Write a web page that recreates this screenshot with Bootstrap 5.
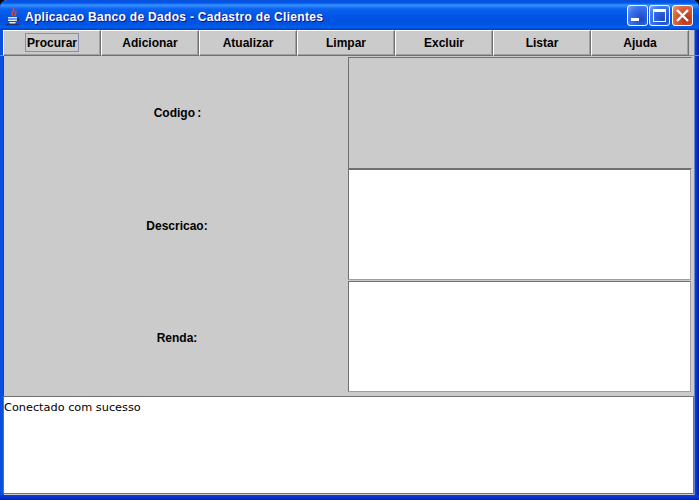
<!DOCTYPE html>
<html lang="pt">
<head>
<meta charset="utf-8">
<title>Aplicacao Banco de Dados</title>
<link rel="stylesheet" href="https://cdn.jsdelivr.net/npm/bootstrap@5.3.0/dist/css/bootstrap.min.css">
<style>
html,body{margin:0;height:500px;overflow:hidden;background:#000}
.xp-window{width:699px;height:500px;background:linear-gradient(90deg,#0a4be0 0,#0855dd 2px,#0a3cd8 4px,#cbcbcb 4px,#cbcbcb 694px,#0a3cd8 695px,#0831c8 697px,#001ea0 699px);border-radius:7px 7px 0 0;overflow:hidden}
.xp-title{height:30px;background:linear-gradient(180deg,#0a4fd8 0,#0058ee 3px,#3a93ff 5px,#0a62f0 9px,#0055e5 16px,#0053e0 24px,#0061f0 27px,#003cc0 30px);padding-left:5px;color:#fff;font:bold 12px/14px "Liberation Sans",sans-serif;letter-spacing:.3px;text-shadow:1px 1px 0 #0f1089}
.xp-title span{white-space:nowrap;margin-left:4px;margin-top:10px}
.xp-ctl{width:21px;height:21px;border:1px solid #fff;border-radius:3px;background:radial-gradient(circle at 70% 70%,#1a46c8,#3b74ee 65%,#7da6f5);margin-left:1px;margin-top:1px}
.xp-close{background:radial-gradient(circle at 70% 70%,#b83010,#e0643c 65%,#eb9a80);margin-left:2px}
.xp-controls{margin-right:6px}
.xp-tools{height:26px;padding-left:3px;border-bottom:1px solid #8a8a8a}
.xp-btn{width:98px;height:26px;background:#cbcbcb;border:1px solid;border-color:#fff #707070 #707070 #fff;box-shadow:inset -1px -1px 0 #a0a0a0;padding:1px 0 0;color:#000;font:bold 12px "Liberation Sans",sans-serif;border-radius:0}
.xp-btn span{padding:1px 0}
.xp-focus span{outline:1px solid #8d8dae;padding:2px 1px 1px}
.xp-form{height:339px;padding:0 3px 0 4px}
.xp-row{height:112px}
.xp-row:first-child{height:113px}
.xp-label{width:344px;padding:2px 0 0 2px;font:bold 12px "Liberation Sans",sans-serif;color:#000}
.xp-tight{word-spacing:-1px;padding-left:3px}
.xp-field{width:344px;padding:0 1px 1px 0}
.xp-row:first-child .xp-field{padding:0}
.xp-input{height:111px;border:1px solid;border-color:#707070 #a0a0a0 #a0a0a0 #707070;background:#fff}
.xp-empty{height:112px;background:#cbcbcb;border-color:#707070 transparent #707070 #707070}
.xp-status{width:691px;height:98px;margin-left:3px;margin-top:2px;background:#fff;border:1px solid #707070;padding:4px 0 0;font:11.3px/14px "DejaVu Sans",sans-serif;color:#000}
.xp-base{height:5px;margin-top:1px;background:linear-gradient(180deg,#0a3cd8,#0831c8 60%,#001ea0)}
</style>
</head>
<body>
<div class="xp-window d-flex flex-column">
  <div class="xp-title d-flex align-items-start">
    <svg width="16" height="20" viewBox="0 0 16 20" class="mt-2" aria-hidden="true">
      <path d="M8 0c3 3-3 4 0 8M10.500 3c1.500 2-1.500 3 0 5" fill="none" stroke="#e8421c" stroke-width="1.700"/>
      <path d="M3 9h9v1.500H3zM3 11.500h9V13H3zM4 14h7l-1 1.500H5z" fill="#dfe6f5"/>
      <path d="M12 10h2v3h-2zM1 16h13v1.200H1z" fill="#26306f"/>
    </svg>
    <span class="flex-grow-1">Aplicacao Banco de Dados - Cadastro de Clientes</span>
    <div class="xp-controls d-flex mt-1">
      <div class="xp-ctl"><svg width="19" height="19" viewBox="0 0 19 19"><rect x="3" y="12" width="8" height="3" fill="#fff"/></svg></div>
      <div class="xp-ctl"><svg width="19" height="19" viewBox="0 0 19 19"><rect x="3.500" y="3.500" width="12" height="12" fill="none" stroke="#fff"/><rect x="3" y="3" width="13" height="3" fill="#fff"/></svg></div>
      <div class="xp-ctl xp-close"><svg width="19" height="19" viewBox="0 0 19 19"><path d="M4 4l11 11M15 4L4 15" stroke="#fff" stroke-width="2.400"/></svg></div>
    </div>
  </div>
  <div class="xp-tools d-flex">
    <button class="btn xp-btn xp-focus"><span>Procurar</span></button>
    <button class="btn xp-btn"><span>Adicionar</span></button>
    <button class="btn xp-btn"><span>Atualizar</span></button>
    <button class="btn xp-btn"><span>Limpar</span></button>
    <button class="btn xp-btn"><span>Excluir</span></button>
    <button class="btn xp-btn"><span>Listar</span></button>
    <button class="btn xp-btn"><span>Ajuda</span></button>
  </div>
  <div class="xp-form">
    <div class="xp-row d-flex">
      <div class="xp-label xp-tight d-flex align-items-center justify-content-center">Codigo :</div>
      <div class="xp-field d-flex flex-column justify-content-end"><div class="xp-input xp-empty"></div></div>
    </div>
    <div class="xp-row d-flex">
      <div class="xp-label d-flex align-items-center justify-content-center">Descricao:</div>
      <div class="xp-field d-flex flex-column justify-content-end"><div class="xp-input"></div></div>
    </div>
    <div class="xp-row d-flex">
      <div class="xp-label d-flex align-items-center justify-content-center">Renda:</div>
      <div class="xp-field d-flex flex-column justify-content-end"><div class="xp-input"></div></div>
    </div>
  </div>
  <div class="xp-status">Conectado com sucesso</div>
  <div class="xp-base"></div>
</div>
</body>
</html>
